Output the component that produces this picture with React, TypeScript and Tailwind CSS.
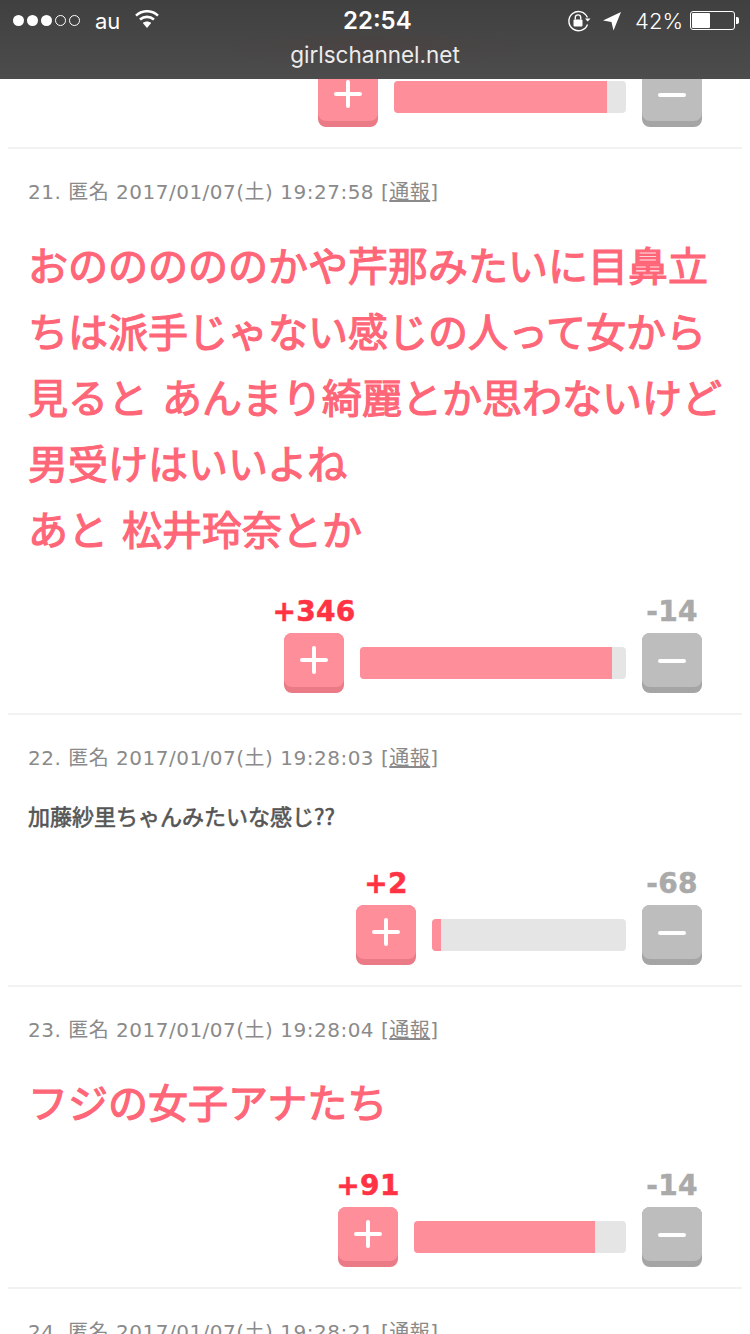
const metaFont = "font-['DejaVu_Sans','Noto_Sans_CJK_JP',sans-serif]";

function StatusBar() {
  return (
    <div className="absolute top-0 left-0 w-full h-[79px] bg-[linear-gradient(to_bottom,#404040,#4c4c4c)] text-white font-['Inter','Roboto',sans-serif]">
      <div className="absolute inset-0 bg-[radial-gradient(ellipse_at_50%_60%,rgba(90,50,50,0.2),rgba(90,50,50,0)_30%)]" />
      <div className="relative h-[41px] flex items-center justify-between pl-[13px] pr-[11px]">
        <div className="flex items-center">
          <div className="flex gap-[3px]">
            <span className="w-[11px] h-[11px] rounded-full bg-white" />
            <span className="w-[11px] h-[11px] rounded-full bg-white" />
            <span className="w-[11px] h-[11px] rounded-full bg-white" />
            <span className="w-[11px] h-[11px] rounded-full border border-white" />
            <span className="w-[11px] h-[11px] rounded-full border border-white" />
          </div>
          <span className="ml-[15px] text-[22px] leading-none">au</span>
          <svg className="ml-[15px] -mt-[3px]" width="24" height="18" viewBox="0 0 24 18" fill="none" stroke="white" strokeWidth="2.6">
            <path d="M1 5.6C7.5-.2 16.5-.2 23 5.6" />
            <path d="M5 9.6c4.2-3.7 9.8-3.7 14 0" />
            <path d="M12 18l-4.2-5c2.4-2 6-2 8.4 0z" fill="white" stroke="none" />
          </svg>
        </div>
        <span className="absolute left-[343px] top-[8px] text-[24px] leading-[26px] font-semibold">22:54</span>
        <div className="flex items-center">
          <svg width="24" height="22" viewBox="0 0 24 22" fill="none" stroke="white" strokeWidth="1.4">
            <path d="M20.5 14.5A9.6 9.6 0 1 1 20.4 7.5" />
            <path d="M18 8.5h5.5l-2.8 3z" fill="white" stroke="none" />
            <rect x="6.5" y="9.5" width="9" height="7" rx="1" fill="white" stroke="none" />
            <path d="M8.3 9.5V7.6a2.7 2.7 0 0 1 5.4 0v1.9" />
          </svg>
          <svg className="ml-[12px]" width="18" height="20" viewBox="0 0 18 20" fill="white">
            <path d="M18 1L0 9.5l8.5 1.5L10.5 19.5z" />
          </svg>
          <span className="ml-[14px] text-[22px] leading-none font-light">42%</span>
          <div className="ml-[7px] w-[45px] h-[19px] rounded-[3px] border border-white p-[1px]">
            <div className="w-[18px] h-full bg-white rounded-[1px]" />
          </div>
          <div className="ml-[1px] w-[3px] h-[7px] bg-white rounded-r-[2px]" />
        </div>
      </div>
      <p className="relative text-center text-[22.5px] leading-[28px] text-[#ececec]">girlschannel.net</p>
    </div>
  );
}

type VoteProps = {
  plus?: string;
  minus?: string;
  barWidth: string;
  fillWidth: string;
};

function VoteBar({ plus, minus, barWidth, fillWidth }: VoteProps) {
  return (
    <div className="flex justify-end pr-[40px]">
      <div className="flex flex-col items-center">
        {plus && (
          <span className="w-[60px] h-[32px] mb-[5px] flex justify-center text-[28px] leading-[32px] font-bold tracking-[0.3px] [-webkit-text-stroke:0.5px_#ff3344] text-[#ff3344] font-['DejaVu_Sans',sans-serif] whitespace-nowrap">
            {plus}
          </span>
        )}
        <button className="w-[60px] h-[60px] rounded-[8px] bg-[#eb7a87] flex items-start">
          <span className="w-full h-[54px] rounded-[8px] bg-[#ff8e9b] flex items-center justify-center">
            <svg width="30" height="30" viewBox="0 0 30 30" stroke="white" strokeWidth="4" strokeLinecap="round">
              <path d="M15 3v24M3 15h24" />
            </svg>
          </span>
        </button>
      </div>
      <div className={`${barWidth} self-end mb-[14px] ml-[16px] h-[32px] rounded-[4px] bg-[#e5e5e5] overflow-hidden`}>
        <div className={`${fillWidth} h-full bg-[#ff8e9b]`} />
      </div>
      <div className="ml-[16px] flex flex-col items-center">
        {minus && (
          <span className="w-[60px] h-[32px] mb-[5px] flex justify-center text-[28px] leading-[32px] font-bold tracking-[0.3px] [-webkit-text-stroke:0.5px_#aaaaaa] text-[#aaaaaa] font-['DejaVu_Sans',sans-serif] whitespace-nowrap">
            {minus}
          </span>
        )}
        <button className="w-[60px] h-[60px] rounded-[8px] bg-[#a5a5a5] flex items-start">
          <span className="w-full h-[54px] rounded-[8px] bg-[#bdbdbd] flex items-center justify-center">
            <svg className="mt-[2px]" width="30" height="30" viewBox="0 0 30 30" stroke="white" strokeWidth="4" strokeLinecap="round">
              <path d="M3 15h24" />
            </svg>
          </span>
        </button>
      </div>
    </div>
  );
}

function Meta({ no, date }: { no: number; date: string }) {
  return (
    <p className={`${metaFont} px-[20px] text-[20px] leading-[28px] tracking-[0.5px] text-[#8a8a8a] whitespace-nowrap`}>
      {no}. 匿名 {date} [<span className="underline">通報</span>]
    </p>
  );
}

export default function App() {
  return (
    <div className="relative w-[750px] h-[1334px] overflow-hidden bg-white">
      <div className="px-[8px] pt-[67px]">
        {/* row 20, mostly under the status bar */}
        <div className="border-b-2 border-[#f2f2f2] pb-[20px]">
          <VoteBar barWidth="w-[232px]" fillWidth="w-[213px]" />
        </div>

        <div className="border-b-2 border-[#f2f2f2] pt-[29px] pb-[20px]">
          <Meta no={21} date="2017/01/07(土) 19:27:58" />
          <p className="mt-[25px] px-[20px] text-[40px] leading-[66px] [-webkit-text-stroke:1.2px_#ff6678] [word-spacing:5px] text-[#ff6678] font-['Noto_Sans_CJK_JP',sans-serif]">
            おのののののかや芹那みたいに目鼻立ちは派手じゃない感じの人って女から見ると あんまり綺麗とか思わないけど男受けはいいよね
            <br />
            あと 松井玲奈とか
          </p>
          <div className="mt-[35px]">
            <VoteBar plus="+346" minus="-14" barWidth="w-[266px]" fillWidth="w-[252px]" />
          </div>
        </div>

        <div className="border-b-2 border-[#f2f2f2] pt-[29px] pb-[20px]">
          <Meta no={22} date="2017/01/07(土) 19:28:03" />
          <p className="mt-[27px] px-[20px] text-[22px] leading-[32px] [-webkit-text-stroke:0.6px_#555555] text-[#555555] font-['Noto_Sans_CJK_JP',sans-serif]">
            加藤紗里ちゃんみたいな感じ??
          </p>
          <div className="mt-[37px]">
            <VoteBar plus="+2" minus="-68" barWidth="w-[194px]" fillWidth="w-[9px]" />
          </div>
        </div>

        <div className="border-b-2 border-[#f2f2f2] pt-[29px] pb-[20px]">
          <Meta no={23} date="2017/01/07(土) 19:28:04" />
          <p className="mt-[24px] px-[20px] text-[40px] leading-[66px] [-webkit-text-stroke:1.2px_#ff6678] text-[#ff6678] font-['Noto_Sans_CJK_JP',sans-serif]">
            フジの女子アナたち
          </p>
          <div className="mt-[36px]">
            <VoteBar plus="+91" minus="-14" barWidth="w-[212px]" fillWidth="w-[181px]" />
          </div>
        </div>

        <div className="pt-[29px]">
          <Meta no={24} date="2017/01/07(土) 19:28:21" />
        </div>
      </div>

      <StatusBar />
    </div>
  );
}
